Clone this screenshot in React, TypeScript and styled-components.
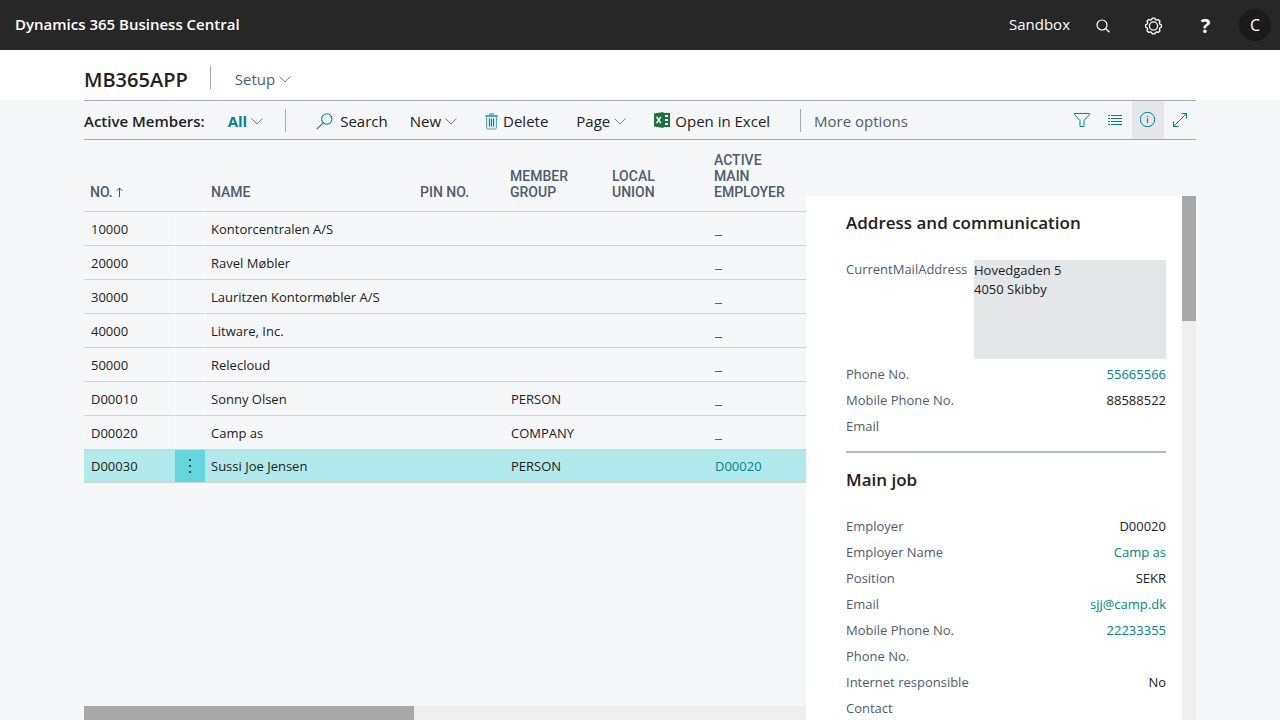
import React from "react";
import styled, { createGlobalStyle, css } from "styled-components";

const color = {
  ink: "#212121",
  slate: "#505c6d",
  teal: "#00838a",
  line: "#a3a9b5",
  rowLine: "#ced3d6",
  page: "#f6f7f9",
  bar: "#272727",
};

const GlobalStyle = createGlobalStyle`
  * { box-sizing: border-box; }
  body {
    margin: 0;
    background: ${color.page};
    color: ${color.ink};
    font-family: "Segoe UI", "Open Sans", "Noto Sans", sans-serif;
    font-size: 13px;
  }
  button, textarea { font: inherit; color: inherit; }
  a { color: ${color.teal}; text-decoration: none; }
`;

const Shell = styled.div`
  display: flex;
  flex-direction: column;
  height: 100vh;
  overflow: hidden;
`;

const TopBar = styled.header`
  display: flex;
  align-items: center;
  flex: none;
  height: 50px;
  padding: 0 9px 0 15px;
  background: ${color.bar};
  color: #fff;
`;

const Brand = styled.a`
  margin-right: auto;
  padding-bottom: 2px;
  color: #fff;
  font-size: 15px;
  font-weight: 600;
`;

const Environment = styled.span`
  margin-right: 8px;
  padding-bottom: 2px;
  font-size: 15px;
`;

const TopButton = styled.button`
  display: flex;
  align-items: center;
  justify-content: center;
  width: 51px;
  height: 50px;
  padding: 2px 0 0;
  border: 0;
  background: none;
`;

const Avatar = styled.button`
  width: 32px;
  height: 32px;
  margin-left: 8px;
  padding: 0;
  border: 0;
  border-radius: 50%;
  background: #1b1b1b;
  font-size: 16px;
  line-height: 32px;
`;

const HelpButton = styled(TopButton)`
  padding: 0;
  font-size: 20px;
  font-weight: 700;
`;

const Masthead = styled.div`
  display: flex;
  align-items: center;
  flex: none;
  height: 50px;
  padding: 8px 84px 0;
  background: #fff;
`;

const Company = styled.h1`
  margin: 0;
  padding-top: 2px;
  font-size: 20px;
  font-weight: 600;
  line-height: 24px;
`;

const Divider = styled.span`
  width: 1px;
  height: 23px;
  background: ${color.line};
`;

const MastheadDivider = styled(Divider)`
  margin: 0 24px 4px 22px;
`;

const TextButton = styled.button<{ $tone?: "slate" | "teal"; $gap?: number }>`
  display: flex;
  align-items: center;
  gap: ${(p) => p.$gap ?? 4}px;
  padding: 0;
  border: 0;
  background: none;
  font-size: 15px;
  line-height: 24px;
  white-space: nowrap;
  ${(p) => p.$tone === "slate" && css`color: ${color.slate};`}
  ${(p) => p.$tone === "teal" && css`color: ${color.teal}; font-weight: 700;`}
`;

const Main = styled.main`
  display: flex;
  flex-direction: column;
  flex: 1;
  min-height: 0;
  margin: 0 84px;
`;

const Toolbar = styled.div`
  display: flex;
  align-items: center;
  flex: none;
  height: 40px;
  border-top: 1px solid ${color.line};
  border-bottom: 1px solid ${color.line};
`;

const ViewPicker = styled.div`
  display: flex;
  align-items: center;
  gap: 23px;
  margin-right: 22px;
  padding-top: 2px;
`;

const ViewName = styled.h2`
  margin: 0;
  font-size: 15px;
  font-weight: 600;
  line-height: 24px;
`;

const Actions = styled.div`
  display: flex;
  align-items: center;
  gap: 28px;
  margin: 0 30px;
  padding-top: 2px;
`;

const ActionPair = styled.div`
  display: flex;
  gap: 22px;
`;

const MoreSlot = styled.div`
  margin-left: 13px;
  padding-top: 2px;
`;

const ViewTools = styled.div`
  display: flex;
  height: 100%;
  margin-left: auto;
`;

const ToolButton = styled.button<{ $active?: boolean }>`
  display: flex;
  align-items: center;
  justify-content: center;
  width: 32px;
  height: 38px;
  padding: 0;
  border: 0;
  background: ${(p) => (p.$active ? "#e5e6e8" : "none")};
  color: ${color.teal};
`;

const Workspace = styled.div`
  display: flex;
  flex: 1;
  min-height: 0;
`;

const ListPane = styled.section`
  display: flex;
  flex-direction: column;
  flex: 1;
  min-width: 0;
`;

const Grid = styled.table`
  width: 100%;
  table-layout: fixed;
  border-collapse: separate;
  border-spacing: 0;
`;

const Col = styled.col<{ $width?: number }>`
  ${(p) => p.$width && css`width: ${p.$width}px;`}
`;

const Head = styled.th<{ $ruled?: boolean }>`
  height: 72px;
  padding: 0 12px 11px 6px;
  border-bottom: 1px solid ${color.rowLine};
  ${(p) => p.$ruled && css`border-right: 1px solid #fafbfc;`}
  color: ${color.slate};
  font-family: "DIN", Roboto, sans-serif;
  font-size: 14px;
  font-weight: 500;
  line-height: 16px;
  text-align: left;
  vertical-align: bottom;
`;

const Row = styled.tr<{ $selected?: boolean }>`
  height: ${(p) => (p.$selected ? 33 : 34)}px;
  background: ${(p) => (p.$selected ? "#b2eaec" : "none")};
`;

const Cell = styled.td<{ $ruled?: boolean }>`
  padding: 0 7px 0 6px;
  border-bottom: 1px solid ${color.rowLine};
  ${(p) => p.$ruled && css`border-right: 1px solid #fafbfc;`}
  line-height: 20px;
  white-space: nowrap;
`;

const ValueCell = styled(Cell)`
  padding: 0 7px;
`;

const MenuCell = styled(Cell)<{ $selected?: boolean }>`
  padding: 0;
  ${(p) =>
    p.$selected &&
    css`
      background: #64d5dc;
      border-right: 0;
    `}
`;

const NumberCell = styled(ValueCell)<{ $selected?: boolean }>`
  ${(p) => p.$selected && css`border-right: 0;`}
`;

const EmptyLink = styled.a`
  font-size: 16px;
`;

const RowMenu = styled.button`
  display: flex;
  align-items: center;
  justify-content: center;
  width: 100%;
  height: 32px;
  padding: 0;
  border: 0;
  background: none;
  color: #3c4a5a;
`;

const HorizontalTrack = styled.div`
  flex: none;
  height: 14px;
  margin-top: auto;
  background: #eee;
`;

const HorizontalThumb = styled.div`
  width: 330px;
  height: 14px;
  background: #a8a8a8;
`;

const FactBox = styled.aside`
  display: flex;
  flex: none;
  width: 390px;
  margin-top: 56px;
  background: #fff;
`;

const Facts = styled.div`
  flex: 1;
  min-width: 0;
  padding: 0 16px 0 40px;
  overflow: hidden;
`;

const VerticalTrack = styled.div`
  width: 14px;
  background: #eee;
`;

const VerticalThumb = styled.div`
  height: 125px;
  background: #a8a8a8;
`;

const FactSection = styled.section`
  padding-bottom: 12px;
  & + & {
    border-top: 2px solid #b6bac1;
  }
`;

const FactTitle = styled.h3`
  margin: 0;
  padding: 14px 0 24px;
  font-size: 17px;
  font-weight: 600;
  line-height: 26px;
  ${FactSection} + ${FactSection} & {
    padding: 14px 0 20px;
  }
`;

const AddressField = styled.div`
  display: flex;
  justify-content: space-between;
  align-items: flex-start;
  margin-bottom: 2px;
`;

const AddressLabel = styled.label`
  color: ${color.slate};
  line-height: 19px;
`;

const AddressBox = styled.textarea`
  width: 192px;
  height: 99px;
  padding: 1px 0;
  border: 0;
  outline: 0;
  resize: none;
  background: #e5e6e8;
  line-height: 19px;
`;

const FactList = styled.dl`
  margin: 0;
`;

const Fact = styled.div`
  display: flex;
  justify-content: space-between;
  line-height: 26px;
  dt { color: ${color.slate}; }
  dd { margin: 0; }
`;

const Chevron = () => (
  <svg width="12" height="8" viewBox="0 0 12 8" fill="none" stroke="#767e8a" aria-hidden>
    <path d="M.5 1.5 6 7 11.5 1.5" />
  </svg>
);

const TopSearchIcon = () => (
  <svg width="16" height="15" viewBox="0 0 16 15" fill="none" stroke="#fff" strokeWidth="1.2">
    <circle cx="6" cy="6" r="5" />
    <path d="m9.7 9.7 3.8 3.6" strokeWidth="1.5" />
  </svg>
);

const gearPath = (() => {
  const points: string[] = [];
  for (let i = 0; i < 8; i++) {
    const mid = (i * Math.PI) / 4;
    [[-0.3, 6.6], [-0.16, 8], [0.16, 8], [0.3, 6.6]].forEach(([turn, radius]) => {
      points.push(
        `${(8.5 + radius * Math.sin(mid + turn)).toFixed(2)} ${(9 - radius * Math.cos(mid + turn)).toFixed(2)}`
      );
    });
  }
  return `M${points.join("L")}Z`;
})();

const GearIcon = () => (
  <svg width="20" height="18" viewBox="0 0 20 18" fill="none" stroke="#fff" strokeWidth="1.3" strokeLinejoin="round">
    <path d={gearPath} />
    <circle cx="8.5" cy="9" r="4.1" />
  </svg>
);

const SearchIcon = () => (
  <svg width="17" height="17" viewBox="0 0 17 17" fill="none" stroke={color.teal} strokeWidth="1.1">
    <circle cx="10.8" cy="6" r="5.2" />
    <path d="M7.2 9.8.8 16.2" />
  </svg>
);

const TrashIcon = () => (
  <svg width="13" height="17" viewBox="0 0 13 17" fill="none" stroke="#4fa9b0">
    <path d="M1.5 4v10.5q0 1.5 1.5 1.5h7q1.5 0 1.5-1.5V4" fill="#d5eef0" />
    <path d="M.5 3.5v-1h12v1ZM4.5 2V.8h4V2" fill="#8ccdd1" />
    <path d="M4.5 5.5v8M6.5 5.5v8M8.5 5.5v8" stroke={color.teal} />
  </svg>
);

const ExcelIcon = () => (
  <svg width="16" height="18" viewBox="0 0 16 18" fill="#1e7145">
    <path d="M0 1.6 9.5 0v16L0 14.4Z" />
    <path d="M9 1h7v14H9Z" />
    <path d="M11 3h3v2h-3zM11 7h3v2h-3zM11 11h3v2h-3z" fill="#fff" />
    <path d="m2.6 4.8 4.2 6.4M6.8 4.8l-4.2 6.4" stroke="#fff" strokeWidth="1.5" />
  </svg>
);

const FilterIcon = () => (
  <svg width="20" height="16" viewBox="0 0 20 16" fill="none" stroke={color.teal}>
    <path d="M.5 1.5h15v1l-5.5 6v6H6v-6l-5.5-6Z" />
  </svg>
);

const ListIcon = () => (
  <svg width="16" height="11" viewBox="0 0 16 11" fill="none" stroke={color.teal}>
    <path d="M0 .5h2M3 .5h11M0 3.5h2M3 3.5h11M0 6.5h2M3 6.5h11M0 9.5h2M3 9.5h11" />
  </svg>
);

const InfoIcon = () => (
  <svg width="17" height="17" viewBox="0 0 17 17" fill="none" stroke={color.teal}>
    <circle cx="7.5" cy="7.5" r="7.2" />
    <path d="M7.5 6.2v5M7.5 3.8V5" />
  </svg>
);

const ExpandIcon = () => (
  <svg width="16" height="16" viewBox="0 0 16 16" fill="none" stroke={color.teal}>
    <path d="M1.5 14.5l13-13M9.5 1.5h5v5M1.5 9.5v5h5" />
  </svg>
);

const SortIcon = () => (
  <svg width="7" height="10" viewBox="0 0 7 10" fill="none" stroke="#50545a">
    <path d="M3.5 10V1M.7 3.8 3.5 1l2.8 2.8" />
  </svg>
);

const DotsIcon = () => (
  <svg width="2" height="14" viewBox="0 0 2 14" fill="currentColor">
    <path d="M0 0h2v2H0zM0 6h2v2H0zM0 12h2v2H0z" />
  </svg>
);

type Member = { no: string; name: string; group?: string; employer?: string };

const members: Member[] = [
  { no: "10000", name: "Kontorcentralen A/S" },
  { no: "20000", name: "Ravel Møbler" },
  { no: "30000", name: "Lauritzen Kontormøbler A/S" },
  { no: "40000", name: "Litware, Inc." },
  { no: "50000", name: "Relecloud" },
  { no: "D00010", name: "Sonny Olsen", group: "PERSON" },
  { no: "D00020", name: "Camp as", group: "COMPANY" },
  { no: "D00030", name: "Sussi Joe Jensen", group: "PERSON", employer: "D00020" },
];

const selectedNo = "D00030";

type FactEntry = { label: string; value?: string; link?: boolean };

const contactFacts: FactEntry[] = [
  { label: "Phone No.", value: "55665566", link: true },
  { label: "Mobile Phone No.", value: "88588522" },
  { label: "Email" },
];

const jobFacts: FactEntry[] = [
  { label: "Employer", value: "D00020" },
  { label: "Employer Name", value: "Camp as", link: true },
  { label: "Position", value: "SEKR" },
  { label: "Email", value: "sjj@camp.dk", link: true },
  { label: "Mobile Phone No.", value: "22233355", link: true },
  { label: "Phone No." },
  { label: "Internet responsible", value: "No" },
  { label: "Contact" },
];

const FactRows = ({ facts }: { facts: FactEntry[] }) => (
  <FactList>
    {facts.map((fact) => (
      <Fact key={fact.label}>
        <dt>{fact.label}</dt>
        <dd>{fact.link ? <a href="#">{fact.value}</a> : fact.value}</dd>
      </Fact>
    ))}
  </FactList>
);

export default function App() {
  return (
    <Shell>
      <GlobalStyle />
      <TopBar>
        <Brand href="#">Dynamics 365 Business Central</Brand>
        <Environment>Sandbox</Environment>
        <TopButton aria-label="Search"><TopSearchIcon /></TopButton>
        <TopButton aria-label="Settings"><GearIcon /></TopButton>
        <HelpButton>?</HelpButton>
        <Avatar>C</Avatar>
      </TopBar>

      <Masthead>
        <Company>MB365APP</Company>
        <MastheadDivider />
        <TextButton $tone="slate">Setup <Chevron /></TextButton>
      </Masthead>

      <Main>
        <Toolbar>
          <ViewPicker>
            <ViewName>Active Members:</ViewName>
            <TextButton $tone="teal">All <Chevron /></TextButton>
          </ViewPicker>
          <Divider />
          <Actions>
            <ActionPair>
              <TextButton $gap={7}><SearchIcon /> Search</TextButton>
              <TextButton>New <Chevron /></TextButton>
            </ActionPair>
            <TextButton $gap={5}><TrashIcon /> Delete</TextButton>
            <TextButton>Page <Chevron /></TextButton>
            <TextButton $gap={5}><ExcelIcon /> Open in Excel</TextButton>
          </Actions>
          <Divider />
          <MoreSlot>
            <TextButton $tone="slate">More options</TextButton>
          </MoreSlot>
          <ViewTools>
            <ToolButton aria-label="Filter"><FilterIcon /></ToolButton>
            <ToolButton aria-label="List view"><ListIcon /></ToolButton>
            <ToolButton aria-label="Details" aria-pressed $active><InfoIcon /></ToolButton>
            <ToolButton aria-label="Expand"><ExpandIcon /></ToolButton>
          </ViewTools>
        </Toolbar>

        <Workspace>
          <ListPane>
            <Grid>
              <colgroup>
                <Col $width={91} />
                <Col $width={30} />
                <Col />
                <Col $width={90} />
                <Col $width={102} />
                <Col $width={102} />
                <Col $width={98} />
              </colgroup>
              <thead>
                <tr>
                  <Head>NO. <SortIcon /></Head>
                  <Head $ruled aria-label="Row actions" />
                  <Head>NAME</Head>
                  <Head>PIN NO.</Head>
                  <Head>MEMBER GROUP</Head>
                  <Head>LOCAL UNION</Head>
                  <Head>ACTIVE MAIN EMPLOYER</Head>
                </tr>
              </thead>
              <tbody>
                {members.map((member) => {
                  const selected = member.no === selectedNo;
                  return (
                    <Row key={member.no} $selected={selected}>
                      <NumberCell $ruled $selected={selected}>{member.no}</NumberCell>
                      <MenuCell $ruled $selected={selected}>
                        {selected && <RowMenu aria-label="Show more"><DotsIcon /></RowMenu>}
                      </MenuCell>
                      <Cell>{member.name}</Cell>
                      <ValueCell />
                      <ValueCell>{member.group}</ValueCell>
                      <ValueCell />
                      <ValueCell>
                        {member.employer ? <a href="#">{member.employer}</a> : <EmptyLink href="#">_</EmptyLink>}
                      </ValueCell>
                    </Row>
                  );
                })}
              </tbody>
            </Grid>
            <HorizontalTrack><HorizontalThumb /></HorizontalTrack>
          </ListPane>

          <FactBox>
            <Facts>
              <FactSection>
                <FactTitle>Address and communication</FactTitle>
                <AddressField>
                  <AddressLabel htmlFor="mail-address">CurrentMailAddress</AddressLabel>
                  <AddressBox id="mail-address" readOnly defaultValue={"Hovedgaden 5\n4050 Skibby"} />
                </AddressField>
                <FactRows facts={contactFacts} />
              </FactSection>
              <FactSection>
                <FactTitle>Main job</FactTitle>
                <FactRows facts={jobFacts} />
              </FactSection>
            </Facts>
            <VerticalTrack><VerticalThumb /></VerticalTrack>
          </FactBox>
        </Workspace>
      </Main>
    </Shell>
  );
}
